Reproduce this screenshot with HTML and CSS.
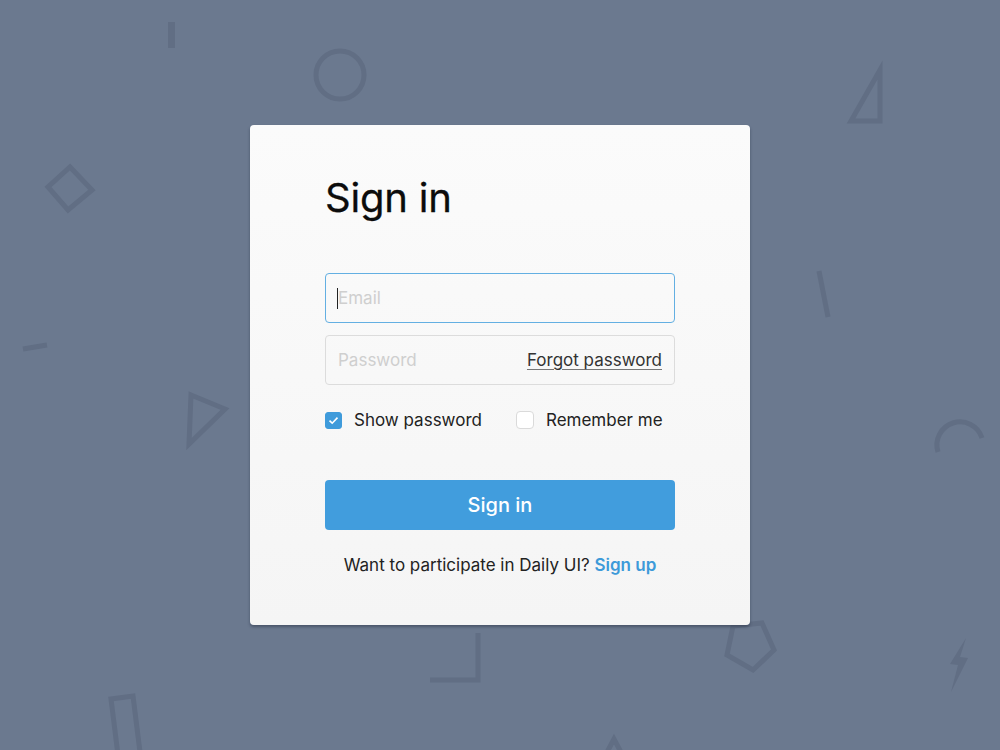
FILE: index.html
```html
<!DOCTYPE html>
<html lang="en">
<head>
    <meta charset="UTF-8">
    <meta name="viewport" content="width=device-width, initial-scale=1.0">
    <title>Sign in</title>
    <link rel="stylesheet" href="styles.css">
</head>
<body>
    <!-- scattered outline shapes behind the card -->
    <svg class="shapes" width="1000" height="750" viewBox="0 0 1000 750">
        <g fill="none" stroke="#616e84" stroke-width="5">
            <circle cx="340" cy="75" r="24"/>
            <polygon points="70,167 92,190 68,210 48,187"/>
            <line x1="23" y1="349" x2="47" y2="345"/>
            <polygon points="880,70 851,121 880,121"/>
            <line x1="819" y1="271" x2="828" y2="317"/>
            <polygon points="191,395 225,409 189,444"/>
            <path d="M938 452 A23 23 0 1 1 982 438"/>
            <polyline points="478,633 478,680 430,680"/>
            <polygon points="762,623 774,650 753,670 727,655 733,626"/>
            <polygon points="111,699 133,696 140,752 118,755"/>
            <polygon points="614,739 605,756 623,756"/>
        </g>
        <rect x="168" y="22" width="7" height="26" fill="#616e84"/>
        <path d="M966 638 L950 664 L958 665 L951 692 L968 658 L960 657 Z" fill="#616e84"/>
    </svg>

    <div class="card">
        <h1 class="title">Sign in</h1>
        <form class="form" action="#" method="post">
            <div class="field field-focus">
                <input type="email" name="email" placeholder="Email">
            </div>
            <div class="field">
                <input type="password" name="password" placeholder="Password">
                <a class="forgot" href="#">Forgot password</a>
            </div>
            <div class="options">
                <label class="check">
                    <span class="box box-on">
                        <svg width="11" height="9" viewBox="0 0 11 9"><path d="M1.5 4.6 L4.2 7.2 L9.5 1.6" fill="none" stroke="#fff" stroke-width="1.6"/></svg>
                    </span>
                    Show password
                </label>
                <label class="check">
                    <span class="box"></span>
                    Remember me
                </label>
            </div>
            <a class="btn" href="#">Sign in</a>
            <p class="signup">Want to participate in Daily UI? <a href="#">Sign up</a></p>
        </form>
    </div>
</body>
</html>
```

FILE: styles.css
```css
*{
    box-sizing: border-box;
    margin: 0px;
    padding: 0px;
}
body{
    width: 100vw;
    height: 100vh;
    background: #6b798f;
    font-family: Inter, "Liberation Sans", sans-serif;
    display: flex;
    justify-content: center;
    align-items: center;
    overflow: hidden;
}
.shapes{
    position: absolute;
    top: 0;
    left: 0;
}
.card{
    position: relative;
    width: 500px;
    height: 500px;
    padding: 49px 75px 0;
    background: linear-gradient(#fbfbfb, #f5f5f5);
    border-radius: 4px;
    box-shadow: 0 2px 3px rgba(30, 40, 60, .45);
}
.title{
    font-size: 40px;
    line-height: 48px;
    font-weight: 400;
    color: #0c0c0c;
    letter-spacing: -0.2px;
    -webkit-text-stroke: 0.3px #0c0c0c;
}
.form{
    margin-top: 51px;
}
.field{
    position: relative;
    display: flex;
    align-items: center;
    height: 50px;
    border: 1px solid #dcdcdc;
    border-radius: 4px;
    margin-bottom: 12px;
    padding: 0 12px;
}
.field-focus{
    border-color: #63afe2;
}
.field-focus::before{
    content: "";
    position: absolute;
    left: 11px;
    top: 14px;
    width: 1px;
    height: 21px;
    background: #222;
}
.field input{
    flex: 1;
    min-width: 0;
    border: none;
    outline: none;
    background: transparent;
    font-family: inherit;
    font-size: 17px;
    color: #222;
}
.field input::placeholder{
    color: #cfcfcf;
}
.forgot{
    flex-shrink: 0;
    white-space: nowrap;
    font-size: 17px;
    color: #333;
    text-decoration: underline;
    text-underline-offset: 3px;
    text-decoration-color: #777;
}
.options{
    display: flex;
    align-items: center;
    gap: 34px;
    height: 20px;
    margin-top: 25px;
}
.check{
    display: flex;
    align-items: center;
    gap: 12px;
    font-size: 17px;
    color: #222;
}
.box{
    display: flex;
    justify-content: center;
    align-items: center;
    width: 18px;
    height: 18px;
    background: #fff;
    border: 1px solid #dadada;
    border-radius: 4px;
}
.box-on{
    width: 17px;
    height: 17px;
    background: #3f9bdb;
    border-color: #3f9bdb;
    border-radius: 3px;
}
.btn{
    display: flex;
    justify-content: center;
    align-items: center;
    height: 50px;
    margin-top: 50px;
    background: #419ddd;
    border-radius: 4px;
    color: #fff;
    font-size: 20px;
    font-weight: 500;
    text-decoration: none;
}
.signup{
    margin-top: 25px;
    line-height: 20px;
    text-align: center;
    font-size: 17px;
    color: #222;
}
.signup a{
    color: #3d9ad9;
    font-weight: 600;
    text-decoration: none;
}
```
